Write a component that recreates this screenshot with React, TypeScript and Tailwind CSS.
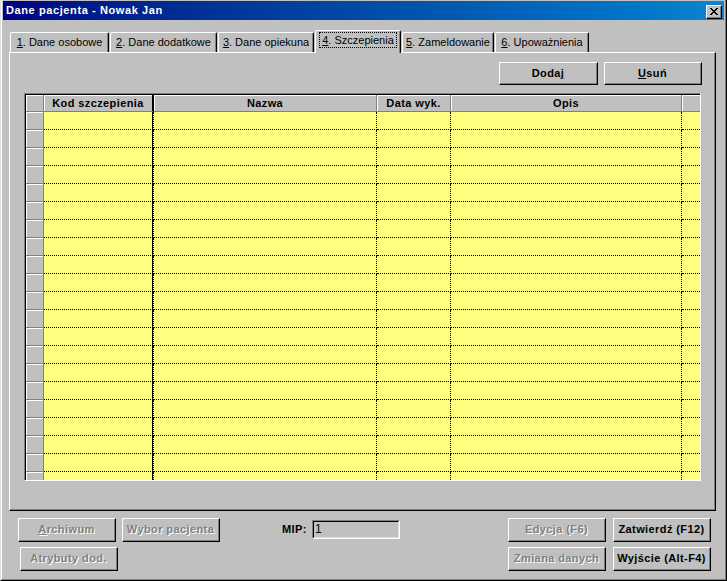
import React from "react";

type Tab = { n: string; label: string; w: string; active?: boolean };

const tabs: Tab[] = [
  { n: "1", label: ". Dane osobowe", w: "w-[99px]" },
  { n: "2", label: ". Dane dodatkowe", w: "w-[107px]" },
  { n: "3", label: ". Dane opiekuna", w: "w-[96px]" },
  { n: "4", label: ". Szczepienia", w: "w-[86px]", active: true },
  { n: "5", label: ". Zameldowanie", w: "w-[92px]" },
  { n: "6", label: ". Upoważnienia", w: "w-[94px]" },
];

function Button({
  children,
  className,
  disabled,
}: {
  children: React.ReactNode;
  className: string;
  disabled?: boolean;
}) {
  return (
    <div
      className={`${className} bg-[#c0c0c0] border-t border-l border-t-white border-l-white border-r border-b border-r-black border-b-black`}
    >
      <div
        className={`h-full flex items-center justify-center border-r border-b border-r-[#808080] border-b-[#808080] text-[11px] font-bold tracking-[0.4px] ${
          disabled ? "text-[#808080] [text-shadow:1px_1px_0_#fff]" : "text-black"
        }`}
      >
        {children}
      </div>
    </div>
  );
}

function CloseGlyph() {
  const rows = ["11000011", "01100110", "00111100", "00011000", "00111100", "01100110", "11000011"];
  return (
    <svg width="8" height="7" viewBox="0 0 8 7" shapeRendering="crispEdges">
      {rows.map((r, y) =>
        r.split("").map((c, x) => (c === "1" ? <rect key={`${x}-${y}`} x={x} y={y} width="1" height="1" fill="#000" /> : null))
      )}
    </svg>
  );
}

function Grid() {
  const rows = Array.from({ length: 21 });
  return (
    <div className="w-[677px] h-[388px] border-t border-l border-t-[#808080] border-l-[#808080] border-r border-b border-r-white border-b-white">
      <div className="h-full border-t border-l border-black flex flex-col overflow-hidden">
        {/* header */}
        <div className="h-[17px] flex shrink-0 bg-[#c0c0c0] text-[11px] font-bold tracking-[0.4px] text-black">
          <div className="w-[18px] border-b border-r border-[#808080] shadow-[inset_1px_1px_0_#fff]" />
          <div className="w-[110px] border-b border-b-[#808080] border-r-2 border-r-black shadow-[inset_1px_1px_0_#fff] flex items-center justify-center">
            Kod szczepienia
          </div>
          <div className="w-[223px] border-b border-r border-[#808080] shadow-[inset_1px_1px_0_#fff] flex items-center justify-center">
            Nazwa
          </div>
          <div className="w-[74px] border-b border-r border-[#808080] shadow-[inset_1px_1px_0_#fff] flex items-center justify-center">
            Data wyk.
          </div>
          <div className="w-[231px] border-b border-r border-[#808080] shadow-[inset_1px_1px_0_#fff] flex items-center justify-center">
            Opis
          </div>
          <div className="flex-1 border-b border-[#808080] shadow-[inset_1px_1px_0_#fff]" />
        </div>
        {/* body */}
        <div className="h-[368px] overflow-hidden">
          {rows.map((_, i) => (
            <div key={i} className="h-[18px] flex">
              <div className="w-[18px] bg-[#c0c0c0] border-b border-r border-[#808080] shadow-[inset_1px_1px_0_#fff]" />
              <div className="w-[109px] bg-[#ffff80] border-b border-black [border-bottom-style:dotted] border-r border-r-black" />
              <div className="w-[224px] bg-[#ffff80] border-b border-l border-r border-black border-dotted" />
              <div className="w-[74px] bg-[#ffff80] border-b border-r border-black border-dotted" />
              <div className="w-[231px] bg-[#ffff80] border-b border-r border-black border-dotted" />
              <div className="flex-1 bg-[#ffff80] border-b border-black border-dotted" />
            </div>
          ))}
        </div>
      </div>
    </div>
  );
}

export default function App() {
  return (
    <div className="w-[727px] h-[581px] bg-[#c0c0c0] font-['Liberation_Sans',Arial,sans-serif] border-l border-l-[#dfdfdf] border-r border-r-black border-b border-b-black">
      <div className="h-full flex flex-col border-l border-l-white border-r border-r-[#808080] border-b border-b-[#808080] p-px">
        {/* Title bar */}
        <div className="h-[19px] shrink-0 flex items-start bg-linear-to-r from-[#000080] to-[#1084d0]">
          <div className="flex-1 pl-[3px] pt-[3px] text-white text-[11px] font-bold tracking-[0.6px] leading-[13px]">
            Dane pacjenta - Nowak Jan
          </div>
          <div className="mt-[4px] mr-[2px] w-[16px] h-[14px] bg-[#c0c0c0] border-t border-l border-t-white border-l-white border-r border-b border-r-black border-b-black">
            <div className="h-full flex items-center justify-center border-r border-b border-r-[#808080] border-b-[#808080]">
              <CloseGlyph />
            </div>
          </div>
        </div>

        {/* Tabs */}
        <div className="mt-[10px] ml-[7px] h-[22px] flex items-end gap-px text-[11px] text-black relative z-10">
          {tabs.map((t) =>
            t.active ? (
              <div
                key={t.n}
                className={`${t.w} h-[23px] -mb-px bg-[#c0c0c0] border-l border-t border-l-white border-t-white border-r border-r-black shadow-[inset_-1px_0_0_#808080] rounded-t-[2px] flex justify-center pt-[1px]`}
              >
                <span className="h-[16px] px-[2px] border border-dotted border-black leading-[14px]">
                  <span className="underline">{t.n}</span>
                  {t.label}
                </span>
              </div>
            ) : (
              <div
                key={t.n}
                className={`${t.w} h-[20px] bg-[#c0c0c0] border-l border-t border-l-white border-t-white border-r border-r-black shadow-[inset_-1px_0_0_#808080] rounded-t-[2px] flex items-center justify-center`}
              >
                <span>
                  <span className="underline">{t.n}</span>
                  {t.label}
                </span>
              </div>
            )
          )}
        </div>

        {/* Panel */}
        <div className="ml-[6px] w-[707px] h-[459px] shrink-0 border-t border-l border-t-white border-l-white border-r border-b border-r-black border-b-black">
          <div className="h-full border-r border-b border-r-[#808080] border-b-[#808080] pt-[9px] pl-[14px] pr-[13px]">
            <div className="flex justify-end gap-[6px] -mr-px">
              <Button className="w-[99px] h-[23px]">
                <span>
                  Doda<span className="underline">j</span>
                </span>
              </Button>
              <Button className="w-[98px] h-[23px]">
                <span>
                  <span className="underline">U</span>suń
                </span>
              </Button>
            </div>
            <div className="mt-[8px]">
              <Grid />
            </div>
          </div>
        </div>

        {/* Bottom */}
        <div className="flex pt-[7px]">
          <div className="ml-[15px] flex flex-col gap-[5px]">
            <div className="flex gap-[6px]">
              <Button className="w-[98px] h-[24px]" disabled>
                <span>
                  <span className="underline">A</span>rchiwum
                </span>
              </Button>
              <Button className="w-[98px] h-[24px]" disabled>
                Wybor pacjenta
              </Button>
            </div>
            <Button className="ml-[2px] w-[98px] h-[24px]" disabled>
              Atrybuty dod.
            </Button>
          </div>

          <div className="ml-[62px] mt-[2px] h-[19px] flex items-center">
            <span className="w-[30px] text-[11px] font-bold tracking-[0.4px]">MIP:</span>
            <div className="w-[88px] h-[19px] border-t border-l border-t-[#808080] border-l-[#808080] border-r border-b border-r-white border-b-white">
              <div className="h-full border-t border-l border-black border-r border-b border-r-[#dfdfdf] border-b-[#dfdfdf] pl-[1px] text-[12px] leading-[15px] text-black">
                1
              </div>
            </div>
          </div>

          <div className="ml-[108px] grid grid-cols-[98px_98px] gap-x-[7px] gap-y-[5px]">
            <Button className="h-[24px]" disabled>
              Edycja (F6)
            </Button>
            <Button className="h-[24px]">Zatwierdź (F12)</Button>
            <Button className="h-[24px]" disabled>
              Zmiana danych
            </Button>
            <Button className="h-[24px]">Wyjście (Alt-F4)</Button>
          </div>
        </div>
      </div>
    </div>
  );
}
